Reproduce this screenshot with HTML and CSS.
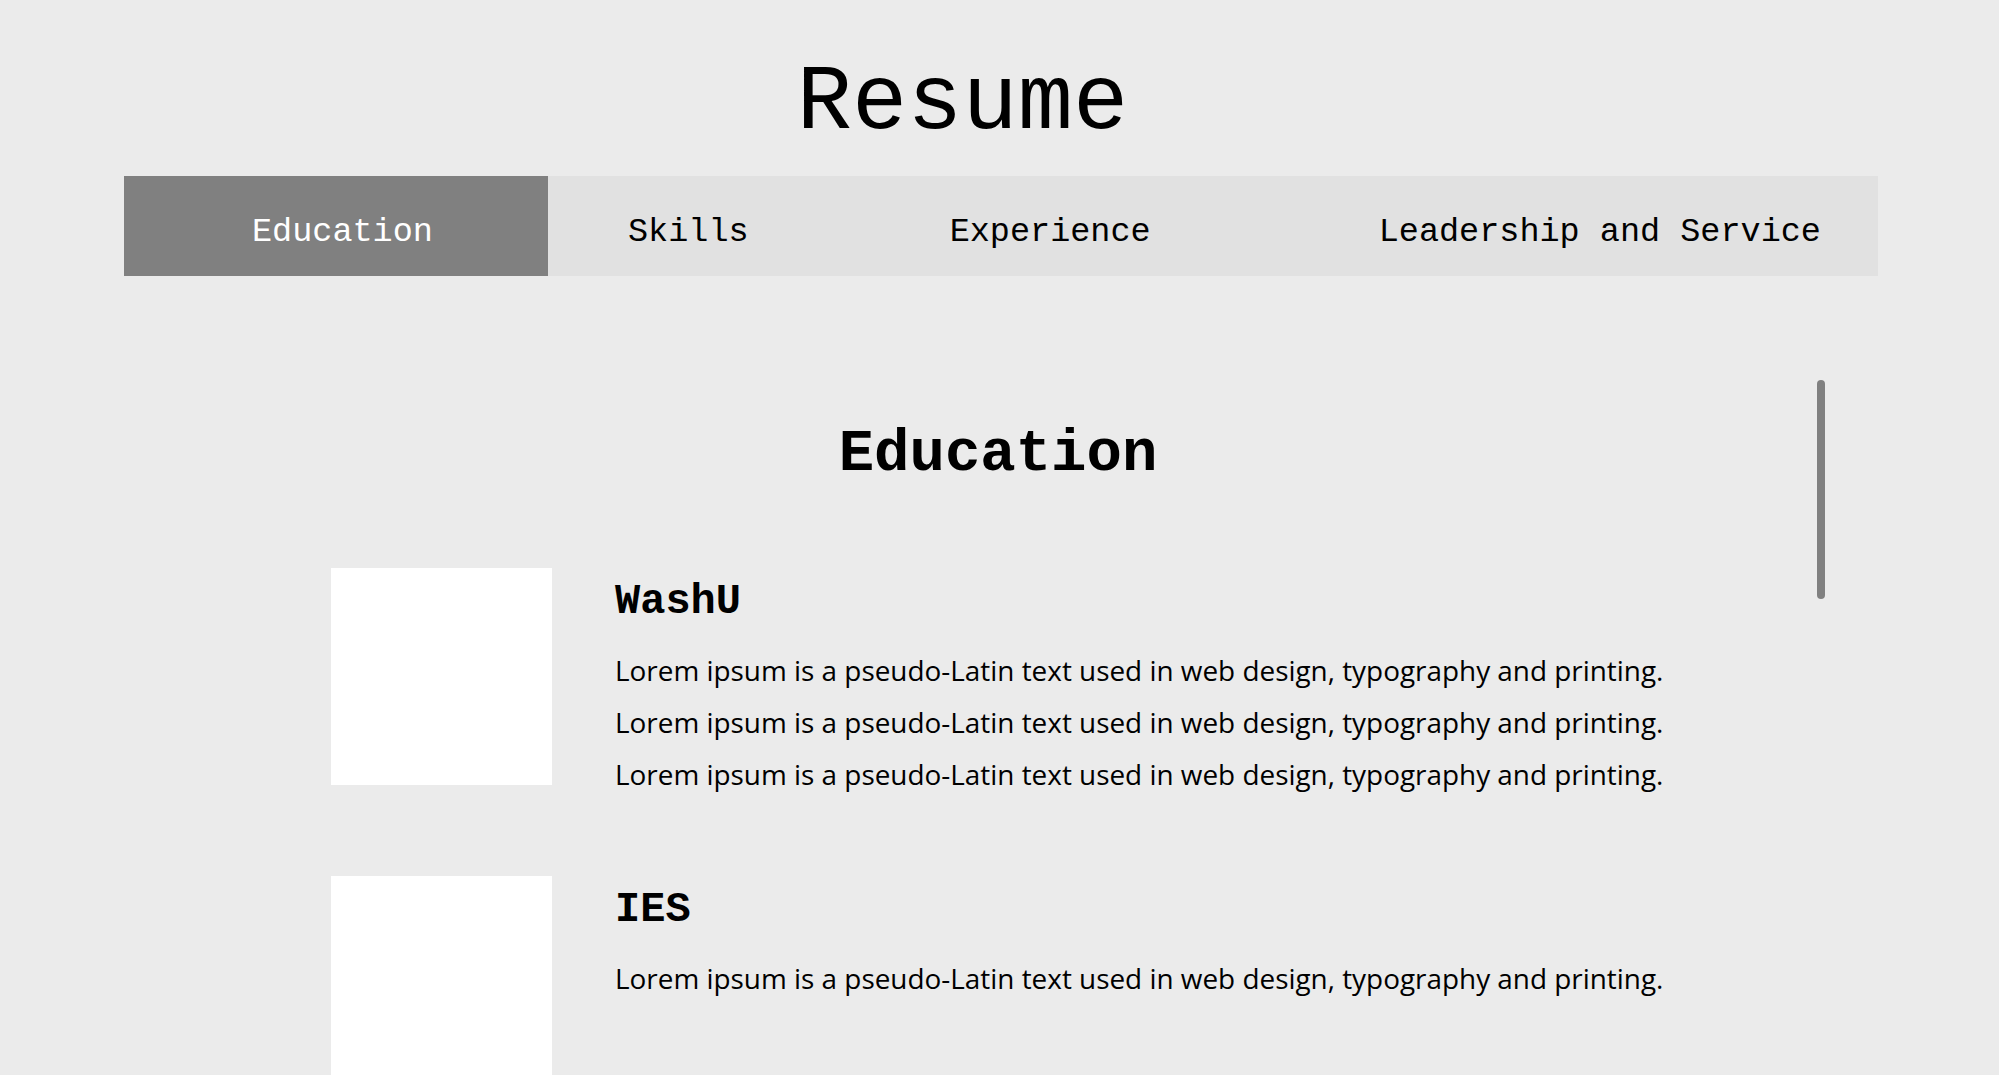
FILE: index.html
```html
<!DOCTYPE html>
<html lang="en">
<head>
<meta charset="utf-8">
<title>Resume</title>
<link rel="stylesheet" href="styles.css">
</head>
<body>
<header class="page-header">
  <h1 class="title">Resume</h1>
</header>
<nav class="tabs">
  <a class="tab tab-active" href="#education">Education</a>
  <a class="tab tab-skills" href="#skills">Skills</a>
  <a class="tab tab-experience" href="#experience">Experience</a>
  <a class="tab tab-leadership" href="#leadership">Leadership and Service</a>
</nav>
<main class="panel">
  <section class="section" id="education">
    <h2 class="section-title">Education</h2>
    <div class="entries">
      <article class="entry">
        <div class="entry-logo"></div>
        <div class="entry-body">
          <h3 class="entry-title">WashU</h3>
          <p class="entry-text">Lorem ipsum is a pseudo-Latin text used in web design, typography and printing.</p>
          <p class="entry-text">Lorem ipsum is a pseudo-Latin text used in web design, typography and printing.</p>
          <p class="entry-text">Lorem ipsum is a pseudo-Latin text used in web design, typography and printing.</p>
        </div>
      </article>
      <article class="entry">
        <div class="entry-logo"></div>
        <div class="entry-body">
          <h3 class="entry-title">IES</h3>
          <p class="entry-text">Lorem ipsum is a pseudo-Latin text used in web design, typography and printing.</p>
        </div>
      </article>
    </div>
  </section>
  <div class="scroll-thumb"></div>
</main>
</body>
</html>
```
FILE: styles.css
```css
html, body {
  margin: 0;
  padding: 0;
}

body {
  background: #ebebeb;
  color: #000;
  font-family: "Liberation Mono", "Courier New", monospace;
  overflow: hidden;
  height: 1075px;
}

.page-header {
  padding: 52px 74px 0 0;
  margin-bottom: 20px;
  text-align: center;
}

.title {
  margin: 0;
  font-size: 92px;
  font-weight: normal;
  line-height: 104px;
}

.tabs {
  display: flex;
  height: 100px;
  margin: 0 121px 0 124px;
  background: #e1e1e1;
  font-size: 33.5px;
}

.tab {
  display: block;
  padding-top: 12px;
  line-height: 88px;
  color: #000;
  text-decoration: none;
  white-space: nowrap;
}

.tab-active {
  box-sizing: border-box;
  width: 424px;
  padding-left: 128px;
  background: #808080;
  color: #fff;
}

.tab-skills { margin-left: 80px; }
.tab-experience { margin-left: 201px; }
.tab-leadership { margin-left: 228px; }

.panel {
  position: relative;
  margin: 102px 0 0 181px;
  width: 1646px;
  height: 697px;
  overflow: hidden;
}

.scroll-thumb {
  position: absolute;
  top: 2px;
  right: 2px;
  width: 8px;
  height: 219px;
  border-radius: 4px;
  background: #808080;
}

.section {
  padding: 43px 0 0;
}

.section-title {
  margin: 0 0 80px;
  padding-right: 12px;
  font-size: 59px;
  font-weight: bold;
  line-height: 67px;
  text-align: center;
}

.entries {
  display: flex;
  flex-direction: column;
  gap: 76px;
  padding-left: 150px;
}

.entry {
  display: flex;
  align-items: flex-start;
}

.entry-logo {
  flex: none;
  width: 221px;
  height: 217px;
  background: #fff;
}

.entry-body {
  margin-left: 63px;
  padding-top: 12px;
}

.entry-title {
  margin: 0 0 19px;
  font-size: 42px;
  font-weight: bold;
  line-height: 45px;
}

.entry-text {
  margin: 0;
  font-family: "Open Sans", "Noto Sans", sans-serif;
  font-size: 27.9px;
  line-height: 52px;
}
```
